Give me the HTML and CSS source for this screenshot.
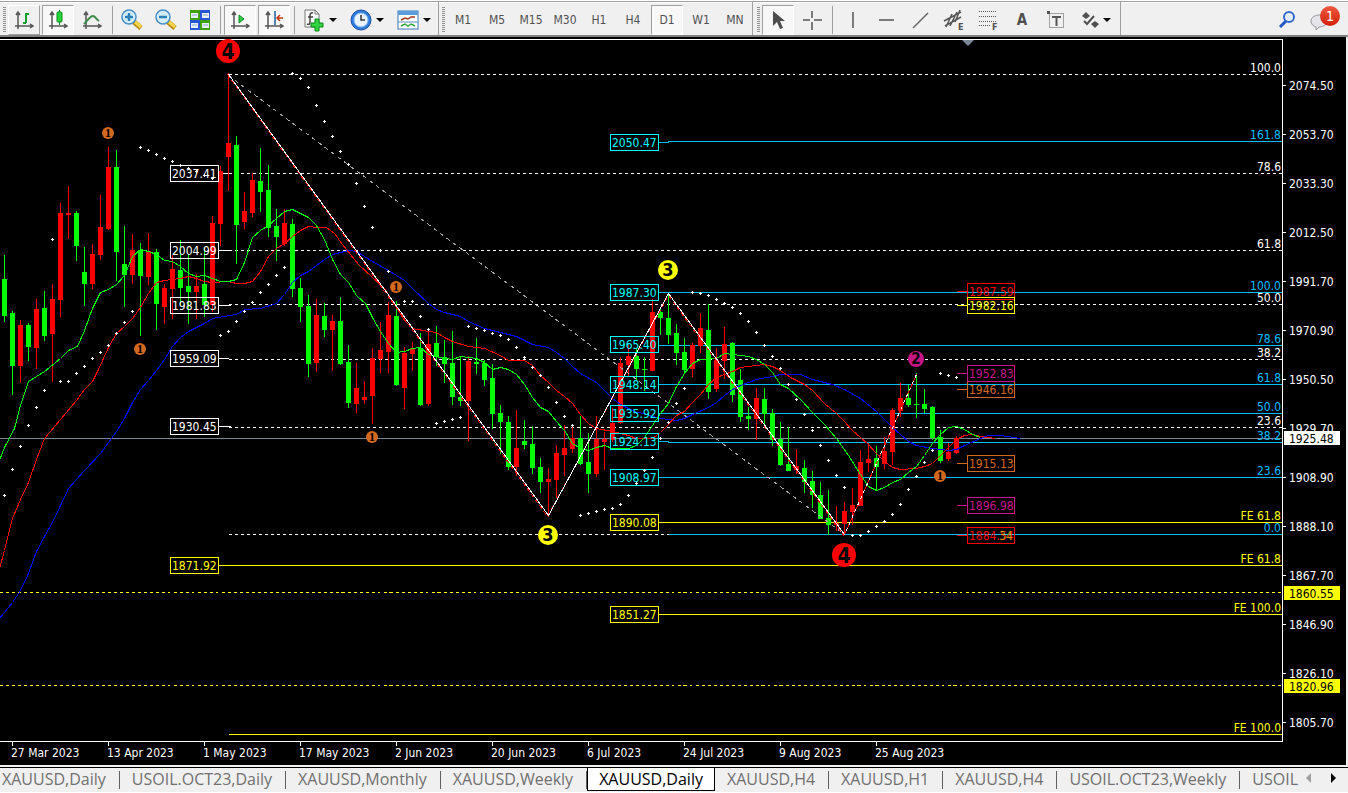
FILE: index.html
```html
<!DOCTYPE html>
<html lang="en">
<head>
    <meta charset="UTF-8">
    <meta name="viewport" content="width=device-width, initial-scale=1.0">
    <title>XAUUSD,Daily</title>
    <link rel="stylesheet" href="styles.css">
</head>
<body>
    <header class="toolbar">
        <div class="group">
            <span class="grip"></span>
            <button class="tool raised" aria-label="Bar chart"><svg width="20" height="20" viewBox="0 0 20 20"><g class="axes"><path d="M4 3V19M1 16H18M2 5L4 2L6 5M16 14L19 16L16 18"/></g><path d="M9 13H12M12 3V13M12 4H15" stroke="#13a32c" stroke-width="2" fill="none"/></svg></button>
            <button class="tool pressed" aria-label="Candlesticks"><svg width="20" height="20" viewBox="0 0 20 20"><g class="axes"><path d="M4 3V19M1 16H18M2 5L4 2L6 5M16 14L19 16L16 18"/></g><path d="M11.5 0V15" stroke="#0a7a1c" stroke-width="1"/><rect x="9" y="2" width="5" height="10" rx="1" fill="#22d63c" stroke="#0a8a20"/></svg></button>
            <button class="tool" aria-label="Line chart"><svg width="20" height="20" viewBox="0 0 20 20"><g class="axes"><path d="M4 3V19M1 16H18M2 5L4 2L6 5M16 14L19 16L16 18"/></g><path d="M2 14C6 10 8 6 11 6C13 6 14 9 17 11" stroke="#3c8a48" stroke-width="2" fill="none"/></svg></button>
            <span class="sep"></span>
            <button class="tool" aria-label="Zoom in"><svg width="22" height="22" viewBox="0 0 22 22"><path d="M13 13L20 19" stroke="#b98a12" stroke-width="5"/><path d="M14 13L20 18" stroke="#f7d54a" stroke-width="3"/><circle cx="8" cy="8" r="7" fill="#d4edfb" stroke="#4a8fc8" stroke-width="1.5"/><path d="M4 8H12M8 4V12" stroke="#2d7fb8" stroke-width="2.5"/></svg></button>
            <button class="tool" aria-label="Zoom out"><svg width="22" height="22" viewBox="0 0 22 22"><path d="M13 13L20 19" stroke="#b98a12" stroke-width="5"/><path d="M14 13L20 18" stroke="#f7d54a" stroke-width="3"/><circle cx="8" cy="8" r="7" fill="#d4edfb" stroke="#4a8fc8" stroke-width="1.5"/><path d="M4 8H12" stroke="#2d7fb8" stroke-width="2.5"/></svg></button>
            <button class="tool" aria-label="Tile windows"><svg width="22" height="22" viewBox="0 0 22 22"><path d="M1 1H11V11H1ZM11 11H21V21H11Z" fill="#3fa010"/><path d="M11 1H21V11H11ZM1 11H11V21H1Z" fill="#2656d6"/><path d="M2 4H9V9H2ZM13 4H20V9H13ZM2 14H9V19H2ZM13 14H20V19H13Z" fill="#e8f0fa"/><path d="M3 6H8M14 6H19M3 16H8M14 16H19" stroke="#8aa8c8"/></svg></button>
            <span class="sep"></span>
            <button class="tool pressed" aria-label="Auto scroll"><svg width="20" height="20" viewBox="0 0 20 20"><g class="axes"><path d="M4 3V19M1 16H18M2 5L4 2L6 5M16 14L19 16L16 18"/></g><path d="M9 5L14 9L9 13Z" fill="#2fd048" stroke="#0f8a22"/></svg></button>
            <button class="tool pressed" aria-label="Chart shift"><svg width="20" height="20" viewBox="0 0 20 20"><g class="axes"><path d="M4 3V19M1 16H18M2 5L4 2L6 5M16 14L19 16L16 18"/></g><path d="M11 1V15" stroke="#1f5f9c" stroke-width="1.5"/><path d="M13 8H19M16 5L13 8L16 11" stroke="#c03a12" stroke-width="1.5" fill="none"/></svg></button>
            <span class="sep"></span>
            <button class="tool wide" aria-label="Indicators"><svg width="24" height="24" viewBox="0 0 24 24"><path d="M3 2H13L17 6V19H3Z" fill="#fafafa" stroke="#777"/><path d="M13 2V6H17" fill="none" stroke="#777"/><path d="M11 5C8 4 8 7 8 9V14C8 16 7 17 5 16M6 9H11" stroke="#444" stroke-width="1.5" fill="none"/><path d="M13 11H17V15H21V19H17V23H13V19H9V15H13Z" fill="#35d443" stroke="#078a16"/></svg><i class="caret"></i></button>
            <button class="tool wide" aria-label="Periods"><svg width="24" height="24" viewBox="0 0 24 24"><circle cx="12" cy="12" r="10" fill="#2d7de0" stroke="#1b4fa4"/><circle cx="12" cy="12" r="7" fill="#eaf4ff" stroke="#8ab8ea"/><path d="M12 7V12H16" stroke="#333" stroke-width="1.5" fill="none"/></svg><i class="caret"></i></button>
            <button class="tool wide" aria-label="Templates"><svg width="24" height="24" viewBox="0 0 24 24"><rect x="2" y="3" width="20" height="18" fill="#fff" stroke="#3a77b8"/><path d="M2 3H22V7H2Z" fill="#5a9cdc"/><path d="M2 14H22" stroke="#5a8cc0"/><path d="M5 12L9 10L12 11L15 9H19" stroke="#a03820" stroke-width="1.5" fill="none"/><path d="M5 18L9 16L12 18L15 16L19 18" stroke="#35a040" stroke-width="1.5" fill="none"/></svg><i class="caret"></i></button>
        </div>
        <div class="group">
            <span class="grip"></span>
            <button class="tool">M1</button>
            <button class="tool">M5</button>
            <button class="tool">M15</button>
            <button class="tool">M30</button>
            <button class="tool">H1</button>
            <button class="tool">H4</button>
            <button class="tool pressed">D1</button>
            <button class="tool">W1</button>
            <button class="tool">MN</button>
        </div>
        <div class="group drawing">
            <span class="grip"></span>
            <button class="tool pressed" aria-label="Cursor"><svg width="20" height="20" viewBox="0 0 20 20"><path d="M5 1V16L9 12L12 19L15 18L12 11H17Z" fill="#4d4d4d"/></svg></button>
            <button class="tool" aria-label="Crosshair"><svg width="20" height="20" viewBox="0 0 20 20"><path d="M1 10H8M12 10H20M10 1V8M10 12V20" stroke="#555" stroke-width="1.5"/></svg></button>
            <span class="sep"></span>
            <button class="tool" aria-label="Vertical line"><svg width="20" height="20" viewBox="0 0 20 20"><path d="M11 2V18" stroke="#555" stroke-width="1.5"/></svg></button>
            <button class="tool" aria-label="Horizontal line"><svg width="20" height="20" viewBox="0 0 20 20"><path d="M3 10H18" stroke="#555" stroke-width="1.5"/></svg></button>
            <button class="tool" aria-label="Trendline"><svg width="20" height="20" viewBox="0 0 20 20"><path d="M3 18L18 3" stroke="#666" stroke-width="1.5"/></svg></button>
            <button class="tool" aria-label="Equidistant channel"><svg width="24" height="24" viewBox="0 0 24 24"><path d="M2 13L19 4M3 18L19 9M4 19L10 6M8 18L15 4M13 14L18 2" stroke="#555" stroke-width="1.5"/><text x="16" y="22" class="glyph">E</text></svg></button>
            <button class="tool" aria-label="Fibonacci retracement"><svg width="24" height="24" viewBox="0 0 24 24"><path d="M3 3.5H20M3 8.5H20M3 13.5H20M3 17.5H14" stroke="#555" stroke-dasharray="1 1"/><text x="16" y="22" class="glyph">F</text></svg></button>
            <button class="tool letter">A</button>
            <button class="tool" aria-label="Text label"><svg width="20" height="20" viewBox="0 0 20 20"><rect x="3.5" y="3.5" width="14" height="14" fill="none" stroke="#555" stroke-dasharray="1 1"/><path d="M1 1H4V4H1Z" fill="#555"/><path d="M6 7H15M10.5 7V16" stroke="#555" stroke-width="2"/></svg></button>
            <button class="tool wide" aria-label="Arrows"><svg width="20" height="20" viewBox="0 0 20 20"><path d="M6 2L10 6L6 9L2 6ZM15 11L19 14L15 18L11 14Z" fill="#505050"/><path d="M4 11L7 14L14 6" stroke="#505050" stroke-width="2" fill="none"/></svg><i class="caret"></i></button>
        </div>
        <div class="right">
            <button class="tool" aria-label="Search"><svg width="20" height="20" viewBox="0 0 20 20"><path d="M9 11L3 17" stroke="#2455c4" stroke-width="3"/><circle cx="12" cy="7" r="5" fill="#e6effc" stroke="#3568cc" stroke-width="2"/></svg></button>
            <button class="tool notify" aria-label="Notifications, 1 new"><svg width="24" height="24" viewBox="0 0 24 24"><path d="M1 13C1 9 5 7 10 7C15 7 18 10 17 14C16 18 12 19 9 19L6 22V19C3 18 1 16 1 13Z" fill="#e4e4ea" stroke="#96969e"/></svg><span class="badge">1</span></button>
        </div>
    </header>

    <main class="chart">
        <svg class="plot" viewBox="0 0 1346 728">
            <!-- all points are window pixels, so the toolbar height is taken off here -->
            <g transform="translate(0 -37)">
                <g class="crisp" transform="translate(.5 .5)">
                    <path class="white dash" d="M228 74H1282M228 173H1282M228 250H1282M228 304H1282M228 359H1282M228 427H1282M228 534H668"/>
                    <path class="white" d="M218 173H230M218 250H230M218 305H230M218 358H228M218 426H230"/>
                    <path class="yellow dash" d="M-1 592H1282M-1 685H1282"/>
                    <path class="sky" d="M658 142H668V141H1282M658 292H1282M658 345H1282M658 384H1282M658 413H1282M658 441H668V442H1282M658 477H1282M668 534H1282"/>
                    <path class="yellow" d="M658 522H1282M218 565H1282M658 614H1282M228 734H1282"/>
                    <path class="slate" d="M-1 438H1282"/>
                </g>
                <g id="candles" class="crisp"></g>
                <g class="crisp" transform="translate(.5 .5)">
                    <polyline class="blue" points="-1,618 12,602 20,590 28,573 36,551 44,536 52,522 60,505 68,488 84,470 100,453 116,431 124,418 132,402 140,389 148,380 156,370 164,359 172,346 180,337 188,331 204,323 212,318 236,314 244,309 260,308 276,303 284,294 292,282 300,275 308,271 316,265 324,259 332,254 348,250 356,251 364,256 372,261 388,270 404,280 412,288 428,303 436,309 444,312 460,316 468,321 484,328 500,332 516,336 532,344 548,347 556,352 564,358 572,366 580,373 596,382 604,390 612,398 620,404 636,412 644,413 652,416 660,418 676,420 684,418 692,414 708,407 716,402 724,395 732,389 740,385 756,379 772,376 780,374 800,374 812,379 832,384 844,389 860,398 876,411 892,427 900,434 908,441 916,445 932,448 948,450 956,449 964,445 980,438 988,435 1000,435 1020,438"/>
                    <polyline class="red" points="-1,568 4,550 12,518 20,499 28,482 36,459 44,438 60,419 76,400 84,389 92,381 98,369 108,347 116,333 124,326 132,318 140,307 148,293 156,282 164,280 180,278 188,276 196,278 204,281 212,282 228,281 236,283 244,283 252,281 260,271 268,256 276,248 284,243 292,236 300,230 308,226 316,227 326,227 334,233 342,244 350,254 358,264 372,277 384,288 396,307 404,320 412,328 428,331 436,332 444,337 452,341 468,346 484,348 500,355 508,360 524,360 532,365 540,375 548,382 556,390 564,396 572,403 580,414 588,423 596,428 612,431 628,435 636,438 652,438 660,432 668,424 676,415 684,411 692,402 700,394 708,384 716,377 724,374 732,371 740,367 748,366 764,364 772,366 780,370 790,377 804,384 812,390 824,403 836,413 844,421 852,430 860,437 868,444 876,453 884,461 892,467 900,469 916,468 924,466 932,463 940,455 948,447 956,439 964,435 972,434 980,436 995,438"/>
                    <polyline class="lime" points="-1,460 4,447 14,428 20,405 28,381 44,371 60,358 68,350 77,346 84,330 92,308 100,292 108,289 116,284 124,275 132,256 140,249 148,251 156,254 164,260 172,261 180,266 188,273 196,276 204,275 212,278 220,281 228,281 236,279 244,262 252,237 260,230 268,225 276,218 284,211 292,209 300,213 308,217 316,225 324,239 332,259 340,274 348,282 356,295 365,303 372,317 380,331 388,343 396,352 404,351 412,348 420,347 428,354 436,356 444,358 452,359 460,356 476,358 484,362 492,369 500,367 508,369 516,374 524,384 532,397 540,407 548,411 556,421 564,430 572,443 580,448 588,450 596,447 604,445 612,448 628,448 636,445 644,437 652,425 660,413 668,403 676,386 684,373 692,363 700,359 716,358 724,353 732,354 748,356 756,359 764,364 772,372 780,384 788,388 800,399 812,412 824,424 836,438 848,455 860,474 868,486 876,490 884,487 892,482 900,479 908,472 916,466 924,455 932,443 940,434 948,427 956,426 964,429 972,434 980,437"/>
                    <polyline class="trend" points="228,75 844,534"/>
                    <polyline class="red zig" points="227,74 547,516 668,295 844,536"/>
                    <polyline class="white" points="228,74 548,515 668,293 844,534 916,374"/>
                    <polyline class="red zig" points="844,534 916,374"/>
                    <path class="white" d="M-1 39H1282V741H-1"/>
                    <path class="white" d="M12 741V745M108 741V745M204 741V745M300 741V745M396 741V745M492 741V745M588 741V745M684 741V745M780 741V745M876 741V745"/>
                    <path class="white" d="M1282 85H1285M1282 134H1285M1282 183H1285M1282 232H1285M1282 281H1285M1282 330H1285M1282 379H1285M1282 428H1285M1282 477H1285M1282 526H1285M1282 575H1285M1282 624H1285M1282 673H1285M1282 722H1285"/>
                </g>
                <path d="M962 40H974L968 46Z" fill="#778899"/>
                <g id="tags"></g>
                <g id="dots" class="crisp"></g>
                <g id="levels" text-anchor="end"></g>
                <g id="prices"></g>
                <g id="dates"></g>
                <g id="waves" text-anchor="middle"></g>
            </g>
        </svg>
    </main>

    <nav class="tabs">
        <a href="#">XAUUSD,Daily</a>
        <a href="#">USOIL.OCT23,Daily</a>
        <a href="#">XAUUSD,Monthly</a>
        <a href="#">XAUUSD,Weekly</a>
        <a href="#" class="active">XAUUSD,Daily</a>
        <a href="#">XAUUSD,H4</a>
        <a href="#">XAUUSD,H1</a>
        <a href="#">XAUUSD,H4</a>
        <a href="#">USOIL.OCT23,Weekly</a>
        <a href="#" class="last">USOIL</a>
        <div class="scroll">
            <button class="prev" aria-label="Previous tabs"></button>
            <button class="next" aria-label="Next tabs"></button>
        </div>
    </nav>
    <script src="chart.js"></script>
</body>
</html>
```
FILE: styles.css
```css
body {
    margin: 0;
    background: #f0f0f0;
    font-family: "Noto Sans", sans-serif;
    font-size: 12px;
}

/* toolbar */
.toolbar {
    display: flex;
    height: 34px;
    border-top: 1px solid #fff;
    border-bottom: 2px solid #808080;
    background: #f0f0f0;
    box-shadow: inset 0 1px #a0a0a0, inset 0 2px #fff;
}
.group {
    display: flex;
    align-items: center;
    gap: 2px;
    padding: 3px 1px 0 3px;
    border-right: 1px solid #a0a0a0;
}
.drawing {
    padding-left: 4px;
}
.grip {
    width: 3px;
    height: 26px;
    background: repeating-linear-gradient(#909090 0 1px, #f0f0f0 1px 2px);
}
.sep {
    width: 1px;
    height: 28px;
    margin: 0 1px 0 2px;
    background: #a0a0a0;
}
.tool {
    display: flex;
    align-items: center;
    justify-content: center;
    box-sizing: border-box;
    width: 32px;
    height: 30px;
    padding: 0;
    border: 1px solid transparent;
    background: none;
    color: #505050;
    font-family: "DejaVu Sans Condensed", "Noto Sans", sans-serif;
    font-size: 12px;
}
.raised {
    border-color: #fff #a0a0a0 #a0a0a0 #fff;
}
.pressed {
    border-color: #a0a0a0 #fff #fff #a0a0a0;
    background: #f8f8f8;
}
.wide {
    width: 45px;
    gap: 3px;
    padding-right: 2px;
}
.letter {
    font-size: 15px;
    font-weight: bold;
}
.caret {
    border: 4px solid transparent;
    border-top-color: #000;
    border-bottom: 0;
}
.axes path {
    fill: none;
    stroke: #555;
    stroke-width: 1.5;
}
.glyph {
    fill: #505050;
    font-size: 9px;
    font-weight: bold;
}
.right {
    display: flex;
    align-items: center;
    gap: 6px;
    margin-left: auto;
    padding: 3px 7px 0 0;
}
.notify {
    position: relative;
    justify-content: flex-start;
}
.badge {
    position: absolute;
    top: 0;
    right: 0;
    width: 20px;
    height: 20px;
    border-radius: 50%;
    background: linear-gradient(#ee5a40, #d42008);
    color: #fff;
    font-size: 14px;
    line-height: 20px;
    text-align: center;
}

/* chart */
.chart {
    background: #000;
    border-right: 2px solid #f0f0f0;
}
.plot {
    display: block;
    width: 100%;
    height: auto;
}
.plot text {
    font-family: "DejaVu Sans Condensed", "Noto Sans", sans-serif;
    font-size: 12px;
}
.crisp {
    shape-rendering: crispEdges;
    fill: none;
}
.white { stroke: #fff; fill: none; }
.yellow { stroke: #ff0; }
.sky { stroke: #00bfff; }
.slate { stroke: #778899; }
.blue { stroke: #00f; }
.red { stroke: #f00; }
.lime { stroke: #0f0; }
.dash { stroke-dasharray: 3 3; }
.zig { stroke-dasharray: 4 3; }
.trend {
    stroke: #a9a9a9;
    stroke-dasharray: 4 4;
}
.plot .wave-big { font-size: 21px; font-weight: bold; }
.plot .wave-mid { font-size: 18px; font-weight: bold; }
.plot .wave-low { font-size: 15px; font-weight: bold; }
.plot .wave-min {
    font-family: "Liberation Serif", serif;
    font-size: 12px;
    font-weight: bold;
}

/* tabs */
.tabs {
    display: flex;
    height: 24px;
    overflow: hidden;
    border-top: 1px solid #000;
    border-bottom: 1px solid #fff;
    box-shadow: 0 -2px #f0f0f0;
    margin-top: 2px;
    font-family: "Open Sans", sans-serif;
    font-size: 16px;
    line-height: 22px;
}
.tabs a {
    position: relative;
    padding: 0 14px 0 12px;
    color: #707070;
    text-decoration: none;
    white-space: nowrap;
}
.tabs a:first-child {
    padding-left: 2px;
}
.tabs a:not(.active, .last)::after {
    content: "";
    position: absolute;
    top: 3px;
    right: 0;
    width: 1px;
    height: 18px;
    background: #606060;
}
.tabs .active {
    padding: 0 11px;
    border: 1px solid #000;
    border-top: 0;
    height: 22px;
    background: #fff;
    color: #000;
}
.tabs .last {
    flex: 1;
    padding-right: 0;
}
.scroll {
    display: flex;
    align-items: center;
    gap: 20px;
    height: 20px;
    padding: 0 12px 0 6px;
}
.scroll button {
    padding: 0;
    border: 5px solid transparent;
    background: none;
}
.scroll .prev {
    border-left: 0;
    border-right-color: #a0a0a0;
}
.scroll .next {
    border-right: 0;
    border-left-color: #000;
}
```
FILE: chart.js
```js
const NS = "http://www.w3.org/2000/svg";

function add(parent, name, attrs, text) {
    const el = document.createElementNS(NS, name);
    for (const key in attrs) el.setAttribute(key, attrs[key]);
    if (text) el.textContent = text;
    document.getElementById(parent).appendChild(el);
}

// one candle per 8px: direction, high, top, bottom, low
const candles = `g 255 279 316 322|g 311 313 366 395|r 320 325 366 383|g 323 325 347 361|r 299 309 348 369|g 291 308 336 341|r 284 299 334 382
r 203 213 300 317|r 186 213 215 239|g 211 213 246 261|g 247 272 284 306|r 244 254 284 289|r 195 227 255 260|r 147 167 229 230|g 150 167 252 281
g 226 264 275 307|r 234 250 275 284|g 243 250 276 336|r 233 251 277 285|g 249 252 304 330|r 284 288 307 324|r 255 269 289 319|g 240 270 288 305
g 254 286 292 324|r 274 286 292 319|g 248 284 305 317|r 216 223 305 312|r 166 171 224 246|r 73 143 157 191|g 136 145 225 264|r 192 211 222 229
r 173 180 213 217|g 148 181 192 212|g 165 190 228 237|g 209 226 237 261|r 209 223 244 246|g 219 224 289 297|g 278 288 307 322|g 295 306 364 377
r 299 315 363 372|g 303 316 330 337|r 315 321 330 371|g 297 321 364 365|g 345 362 403 408|r 363 388 404 413|r 381 397 400 404|r 348 358 396 424
r 322 350 359 373|r 302 315 352 373|g 301 316 385 386|r 347 353 388 409|r 342 348 354 371|g 333 348 405 406|r 332 344 404 406|g 326 343 356 366
g 340 357 364 383|g 331 363 397 405|g 357 397 401 406|r 356 361 401 441|g 338 362 364 374|g 360 363 380 386|g 364 378 414 429|g 405 413 422 454
g 416 422 467 470|r 410 448 467 476|g 420 441 445 449|g 426 444 468 474|g 458 467 482 493|r 468 479 482 517|r 445 453 480 498|r 425 448 455 476
r 425 438 449 453|g 416 438 464 465|g 433 462 474 493|r 416 439 474 477|r 432 439 442 470|r 408 423 440 442|r 357 363 423 424|r 345 356 365 376
g 348 356 369 381|g 357 369 370 391|r 299 312 371 371|g 307 312 318 335|g 293 318 335 344|g 324 333 353 365|g 338 352 370 373|r 343 345 369 377
r 313 328 346 353|g 304 330 392 399|r 348 360 389 392|r 327 344 361 379|g 342 343 395 402|g 369 380 417 422|g 407 416 419 430|r 388 398 419 440
g 388 399 414 426|g 409 413 440 446|g 422 439 465 466|g 427 464 471 471|r 449 466 470 474|g 460 468 482 493|g 471 481 495 508|g 482 495 519 519
g 490 518 525 535|r 506 523 525 531|r 502 511 524 535|r 488 505 512 525|r 450 462 506 506|r 443 459 463 472|g 446 458 467 490|r 437 451 464 469
r 408 410 452 465|r 383 398 411 417|g 385 398 405 407|g 373 404 405 418|g 389 404 409 413|g 406 407 438 440|g 430 437 461 463|r 443 452 459 461|r 436 438 453 454`;

candles.split(/[|\n]/).forEach((row, i) => {
    const [dir, high, top, bottom, low] = row.split(" ");
    const fill = dir === "g" ? "#0f0" : "#f00";
    const x = 4 + i * 8;
    add("candles", "rect", { x: x, y: high, width: 1, height: low - high, fill });
    add("candles", "rect", { x: x - 2, y: top, width: 5, height: bottom - top, fill });
});

// parabolic dots: first x, then one y per 8px
const dots = [
    [4, 495, 469, 446, 425, 407, 390],
    [52, 239],
    [60, 381, 381, 373, 366, 358, 352, 345, 333, 322, 311],
    [140, 147, 150, 154, 158, 161, 165, 168, 171, 175, 178],
    [220, 335, 331, 321, 311, 302, 292, 284, 275, 267],
    [292, 73, 78, 87, 105, 121, 136, 151, 164, 183, 206, 227, 250, 271, 289, 301, 301, 316, 329],
    [436, 423, 421, 419, 417],
    [468, 326, 328, 330, 333, 335, 339, 347, 357, 367, 375, 387, 402, 416, 425],
    [580, 515, 513, 511, 509, 508, 504, 495, 483, 470, 457, 438, 422, 403, 388],
    [692, 292, 293, 295, 299, 303, 307, 313, 321, 332, 345, 356, 368, 384, 399, 414, 430, 445, 460, 475, 487],
    [852, 535, 535, 531, 526, 521, 514, 504, 489, 476, 462, 450],
    [940, 373, 375, 377]
];
dots.forEach(([x, ...ys]) => ys.forEach((y, i) => {
    const left = x + i * 8;
    add("dots", "path", { d: `M${left - 1} ${y}h3v1h-3zM${left} ${y - 1}h1v3h-1z`, fill: "#fff" });
}));

// boxed prices: left edge, middle, colour, value
const tags = [
    [170, 173, "#fff", "2037.41"], [170, 250, "#fff", "2004.99"], [170, 305, "#fff", "1981.83"],
    [170, 358, "#fff", "1959.09"], [170, 426, "#fff", "1930.45"], [170, 565, "#ff0", "1871.92"],
    [610, 142, "#0ff", "2050.47"], [610, 292, "#0ff", "1987.30"], [610, 344, "#0ff", "1965.40"],
    [610, 384, "#0ff", "1948.14"], [610, 413, "#0ff", "1935.92"], [610, 441, "#0ff", "1924.13"],
    [610, 477, "#0ff", "1908.97"], [610, 522, "#ff0", "1890.08"], [610, 614, "#ff0", "1851.27"],
    [967, 291, "#f00", "1987.59"], [967, 305, "#ff0", "1982.16"], [967, 389, "#d2691e", "1946.16"],
    [967, 373, "#c71585", "1952.83"], [967, 463, "#d2691e", "1915.13"], [967, 505, "#c71585", "1896.98"],
    [967, 535, "#f00", "1884.54"]
];
tags.forEach(([x, y, color, value]) => {
    add("tags", "rect", { x: x + .5, y: y - 7.5, width: x > 900 ? 47 : 48, height: 16, fill: "none", stroke: color });
    add("tags", "text", { x: x + 2, y: y + 5, fill: color }, value);
    if (x > 900) add("tags", "path", { d: `M957 ${y}.5H967`, stroke: color });
});
add("tags", "text", { x: 999, y: 540, fill: "#ff0", "fill-opacity": .6 }, "34");

const levels = [
    [67, "#fff", "100.0"], [166, "#fff", "78.6"], [243, "#fff", "61.8"], [297, "#fff", "50.0"],
    [352, "#fff", "38.2"], [420, "#fff", "23.6"], [134, "#00bfff", "161.8"], [285, "#00bfff", "100.0"],
    [338, "#00bfff", "78.6"], [377, "#00bfff", "61.8"], [406, "#00bfff", "50.0"], [435, "#00bfff", "38.2"],
    [470, "#00bfff", "23.6"], [527, "#00bfff", "0.0"], [515, "#ff0", "FE 61.8"], [558, "#ff0", "FE 61.8"],
    [607, "#ff0", "FE 100.0"], [727, "#ff0", "FE 100.0"]
];
levels.forEach(([y, fill, value]) => add("levels", "text", { x: 1281, y: y + 5, fill }, value));

const prices = ["2074.50", "2053.70", "2033.30", "2012.50", "1991.70", "1970.90", "1950.50",
    "1929.70", "1908.90", "1888.10", "1867.70", "1846.90", "1826.10", "1805.70"];
prices.forEach((value, i) => add("prices", "text", { x: 1289, y: 90 + i * 49, fill: "#fff" }, value));

[[438, "#fff", "1925.48"], [593, "#ff0", "1860.55"], [686, "#ff0", "1820.96"]].forEach(([y, fill, value]) => {
    add("prices", "rect", { x: 1284, y: y - 7, width: 56, height: 14, fill });
    add("prices", "text", { x: 1289, y: y + 5, fill: "#000" }, value);
});

const dates = ["27 Mar 2023", "13 Apr 2023", "1 May 2023", "17 May 2023", "2 Jun 2023",
    "20 Jun 2023", "6 Jul 2023", "24 Jul 2023", "9 Aug 2023", "25 Aug 2023"];
dates.forEach((value, i) => add("dates", "text", { x: 11 + i * 96, y: 757, fill: "#fff" }, value));

// wave numbers: x, y, radius, colour, number, text class
const waves = [
    [228, 51, 12, "#f00", "4", "wave-big", 8], [844, 555, 12, "#f00", "4", "wave-big", 8],
    [548, 535, 10, "#ff0", "3", "wave-mid", 6], [668, 270, 10, "#ff0", "3", "wave-mid", 6],
    [916, 359, 8, "#c71585", "2", "wave-low", 5],
    [108, 133, 6, "#d2691e", "1", "wave-min", 4], [140, 349, 6, "#d2691e", "1", "wave-min", 4],
    [372, 437, 6, "#d2691e", "1", "wave-min", 4], [396, 287, 6, "#d2691e", "1", "wave-min", 4],
    [940, 476, 6, "#d2691e", "1", "wave-min", 4]
];
waves.forEach(([x, y, r, fill, num, cls, drop]) => {
    add("waves", "circle", { cx: x, cy: y, r, fill });
    add("waves", "text", { x, y: y + drop, class: cls }, num);
});
```
